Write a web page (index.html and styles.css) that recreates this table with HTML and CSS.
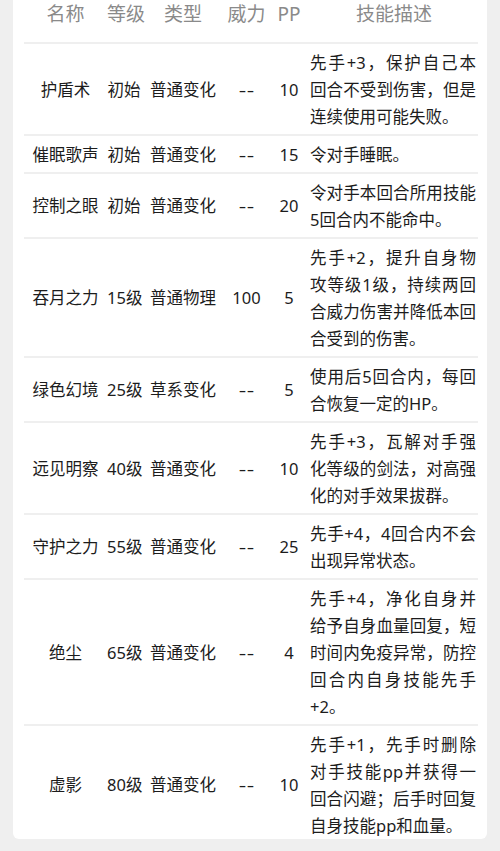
FILE: index.html
```html
<!DOCTYPE html>
<html lang="zh">
<head>
<meta charset="utf-8">
<link rel="stylesheet" href="styles.css">
</head>
<body>
<div class="card">
  <table class="skills">
    <colgroup>
      <col class="c-name"><col class="c-lv"><col class="c-type"><col class="c-pow"><col class="c-pp"><col class="c-desc">
    </colgroup>
    <thead>
      <tr><th>名称</th><th>等级</th><th>类型</th><th>威力</th><th>PP</th><th>技能描述</th></tr>
    </thead>
    <tbody>
      <tr><td>护盾术</td><td>初始</td><td>普通变化</td><td><span class="nil">--</span></td><td>10</td><td class="desc">先手+3，保护自己本回合不受到伤害，但是连续使用可能失败。</td></tr>
      <tr><td>催眠歌声</td><td>初始</td><td>普通变化</td><td><span class="nil">--</span></td><td>15</td><td class="desc">令对手睡眠。</td></tr>
      <tr><td>控制之眼</td><td>初始</td><td>普通变化</td><td><span class="nil">--</span></td><td>20</td><td class="desc">令对手本回合所用技能5回合内不能命中。</td></tr>
      <tr><td>吞月之力</td><td>15级</td><td>普通物理</td><td>100</td><td>5</td><td class="desc">先手+2，提升自身物攻等级1级，持续两回合威力伤害并降低本回合受到的伤害。</td></tr>
      <tr><td>绿色幻境</td><td>25级</td><td>草系变化</td><td><span class="nil">--</span></td><td>5</td><td class="desc">使用后5回合内，每回合恢复一定的HP。</td></tr>
      <tr><td>远见明察</td><td>40级</td><td>普通变化</td><td><span class="nil">--</span></td><td>10</td><td class="desc">先手+3，瓦解对手强化等级的剑法，对高强化的对手效果拔群。</td></tr>
      <tr><td>守护之力</td><td>55级</td><td>普通变化</td><td><span class="nil">--</span></td><td>25</td><td class="desc">先手+4，4回合内不会出现异常状态。</td></tr>
      <tr><td>绝尘</td><td>65级</td><td>普通变化</td><td><span class="nil">--</span></td><td>4</td><td class="desc">先手+4，净化自身并给予自身血量回复，短时间内免疫异常，防控回合内自身技能先手+2。</td></tr>
      <tr class="last"><td>虚影</td><td>80级</td><td>普通变化</td><td><span class="nil">--</span></td><td>10</td><td class="desc">先手+1，先手时删除对手技能pp并获得一回合闪避；后手时回复自身技能pp和血量。</td></tr>
    </tbody>
  </table>
</div>
</body>
</html>
```
FILE: styles.css
```css
html, body {
  margin: 0;
  padding: 0;
  background: #efefef;
}
body {
  font-family: "Noto Sans", "Noto Sans CJK SC", sans-serif;
  color: #1c1c1c;
}
.card {
  margin: 0 13px;
  padding: 0 9px 0 11px;
  background: #ffffff;
  border-radius: 0 0 6px 6px;
}
.skills {
  width: 454px;
  table-layout: fixed;
  border-collapse: separate;
  border-spacing: 0;
}
.c-name { width: 83px; }
.c-lv { width: 34px; }
.c-type { width: 84px; }
.c-pow { width: 43px; }
.c-pp { width: 42px; }
.c-desc { width: 168px; }
.skills th {
  font-weight: normal;
  font-size: 19px;
  line-height: 28px;
  color: #8a8a8a;
  padding: 0 0 14px;
  text-align: center;
  white-space: nowrap;
  border-bottom: 2px solid #efefef;
}
.skills td {
  font-size: 16.5px;
  line-height: 27px;
  padding: 4.5px 0;
  text-align: center;
  vertical-align: middle;
  white-space: nowrap;
  border-bottom: 2px solid #efefef;
}
.skills td.desc {
  white-space: normal;
  text-align: justify;
  padding-right: 2px;
}
.nil {
  display: inline-block;
  letter-spacing: 0.5px;
  transform: scaleX(1.4);
}
.skills tr.last td {
  border-bottom: none;
  padding-bottom: 0;
}
```
